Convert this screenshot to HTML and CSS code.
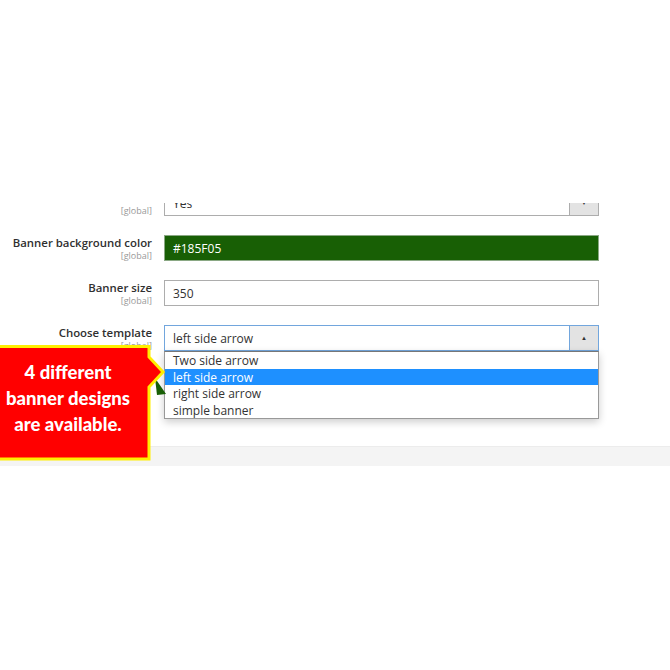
FILE: index.html
```html
<!DOCTYPE html>
<html lang="en">
<head>
  <meta charset="UTF-8">
  <title>Banner settings</title>
  <link rel="stylesheet" href="styles.css">
</head>
<body>
  <div class="page">
    <div class="config">
      <div class="row row-cut">
        <div class="label">
          <span class="label-title">Enable banner</span>
          <span class="scope">[global]</span>
        </div>
        <div class="select">
          <span class="select-value">Yes</span>
          <span class="select-btn">&#9660;</span>
        </div>
      </div>

      <div class="row">
        <div class="label">
          <span class="label-title">Banner background color</span>
          <span class="scope">[global]</span>
        </div>
        <div class="input input-color">#185F05</div>
      </div>

      <div class="row">
        <div class="label">
          <span class="label-title">Banner size</span>
          <span class="scope">[global]</span>
        </div>
        <div class="input">350</div>
      </div>

      <div class="row">
        <div class="label">
          <span class="label-title">Choose template</span>
          <span class="scope">[global]</span>
        </div>
        <div class="field">
          <div class="select select-open">
            <span class="select-value">left side arrow</span>
            <span class="select-btn">&#9650;</span>
          </div>
          <ul class="options">
            <li>Two side arrow</li>
            <li class="active">left side arrow</li>
            <li>right side arrow</li>
            <li>simple banner</li>
          </ul>
        </div>
      </div>
    </div>
    <div class="footer-band"></div>

    <!-- promo callout over the form -->
    <div class="callout">
      <svg class="callout-shape" width="170" height="120" viewBox="0 0 170 120">
        <polygon points="155,33 166,49 157,50" fill="#185f05"/>
        <polygon points="-4,1.5 149,1.5 149,12 163,27 149,42 149,114 -4,114" fill="#ff0000" stroke="#ffee00" stroke-width="3" stroke-linejoin="miter"/>
      </svg>
      <div class="callout-text">4 different<br>banner designs<br>are available.</div>
    </div>
  </div>
</body>
</html>
```

FILE: styles.css
```css
body {
  margin: 0;
  background: #fff;
  font-family: 'Open Sans', sans-serif;
  color: #303030;
}
.page {
  position: relative;
  width: 670px;
  height: 670px;
  padding-top: 203px;
  box-sizing: border-box;
}
.config {
  overflow: hidden;
  height: 243px;
}
.row {
  display: flex;
  gap: 12px;
  height: 26px;
  margin-bottom: 19px;
}
.row-cut {
  margin-top: -13px;
}
.label {
  width: 152px;
  display: flex;
  flex-direction: column;
  align-items: flex-end;
  padding-top: 1px;
}
.label-title {
  font-size: 11.4px;
  font-weight: 600;
  line-height: 14px;
  color: #303030;
  white-space: nowrap;
}
.scope {
  font-size: 9px;
  line-height: 10px;
  margin-top: 1px;
  color: #999;
}
.input,
.select {
  width: 435px;
  height: 26px;
  box-sizing: border-box;
  border: 1px solid #adadad;
  font-size: 12px;
  line-height: 25px;
  padding-left: 8px;
  color: #333;
  background: #fff;
}
.input-color {
  background: #185f05;
  border-color: #8aa884;
  color: #fff;
}
.select {
  display: flex;
  justify-content: space-between;
  padding-right: 0;
}
.select-btn {
  width: 28px;
  background: #e3e3e3;
  border-left: 1px solid #adadad;
  font-size: 6px;
  line-height: 24px;
  text-align: center;
  color: #333;
}
.field {
  position: relative;
  width: 435px;
}
.select-open {
  border-color: #72a6dd;
}
.select-open .select-btn {
  border-left-color: #72a6dd;
}
.options {
  position: absolute;
  top: 26px;
  left: 0;
  width: 435px;
  box-sizing: border-box;
  margin: 0;
  padding: 0;
  list-style: none;
  background: #fff;
  border: 1px solid #999;
  border-top-color: #777;
  box-shadow: 0 3px 8px rgba(0, 0, 0, 0.2);
  font-size: 12px;
  color: #333;
}
.options li {
  height: 16.5px;
  line-height: 17px;
  padding-left: 8px;
}
.options .active {
  background: #1e90ff;
  color: #fff;
}
.footer-band {
  height: 20px;
  background: #f4f4f4;
  border-top: 1px solid #ececec;
  box-sizing: border-box;
}
.callout {
  position: absolute;
  left: 0;
  top: 345px;
  width: 170px;
  height: 120px;
}
.callout-shape {
  position: absolute;
  left: 0;
  top: 0;
}
.callout-text {
  position: absolute;
  left: 0;
  top: 14px;
  width: 136px;
  text-align: center;
  font-family: 'Lato', sans-serif;
  font-weight: 900;
  font-size: 18.5px;
  line-height: 26px;
  color: #fff;
}
```
